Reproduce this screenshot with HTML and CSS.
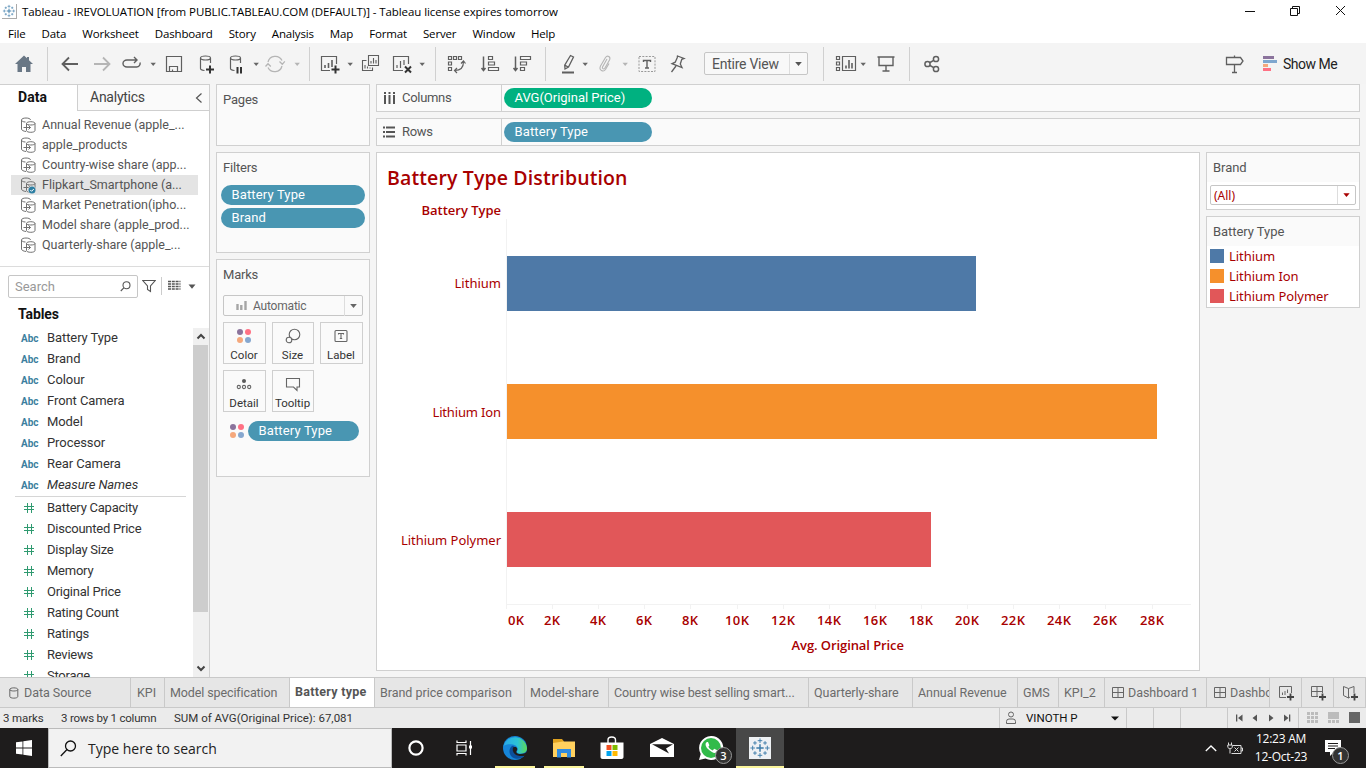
FILE: index.html
```html
<!DOCTYPE html>
<html lang="en">
<head>
<meta charset="utf-8">
<title>Tableau - IREVOLUATION</title>
<link rel="stylesheet" href="styles.css">
</head>
<body>
<svg class="defs" width="0" height="0">
  <symbol id="caret" viewBox="0 0 8 22"><path d="M1.500 9.700h5.400L4.200 13z" fill="currentColor"/></symbol>
  <symbol id="caretbig" viewBox="0 0 18 20"><path d="M5.500 8h7L9 12.200z" fill="currentColor"/></symbol>
  <symbol id="ds" viewBox="0 0 16 18"><g fill="none" stroke="#707070"><path d="M6 15.500C3.500 15.200 1.500 14.300 1.500 13V4c0-1.300 2-2 4.500-2s4.500.7 4.500 2M1.500 4c0 1 1.500 2 4 2"/><path d="M6.500 7.500v7c0 2.400 8.500 2.400 8.500 0v-7c0-2.400-8.500-2.400-8.500 0c0 2 8.500 2 8.500 0M3.500 11.500h7M8.500 9.500l2 2-2 2"/></g></symbol>
  <symbol id="dots" viewBox="0 0 16 16"><circle cx="4" cy="4" r="3" fill="#8b739c"/><circle cx="12" cy="4" r="3" fill="#ff7184"/><circle cx="4" cy="12" r="3" fill="#f5a87c"/><circle cx="12" cy="12" r="3" fill="#86a7cf"/></symbol>
  <symbol id="logo" viewBox="0 0 24 24"><g stroke="#3b7ba8" fill="none"><path d="M12 8v8M8 12h8" stroke-width="1.600"/><path d="M12 1.500v5M9.500 4h5M12 17.500v5M9.500 20h5M1.500 12h5M4 9.500v5M17.500 12h5M20 9.500v5M6.500 4.500v4M4.500 6.500h4M17.500 4.500v4M15.500 6.500h4M6.500 15.500v4M4.500 17.500h4M17.500 15.500v4M15.500 17.500h4" stroke-width="1"/></g></symbol>
  <symbol id="grid4" viewBox="0 0 12 12"><path d="M.5.5h11v10H.5zM.5 5.500h11M6 .5v10" fill="none" stroke="#666"/></symbol>
</svg>

<header class="titlebar">
  <svg class="app" width="15" height="15"><use href="#logo"/></svg>
  <span class="title">Tableau - IREVOLUATION [from PUBLIC.TABLEAU.COM (DEFAULT)] - Tableau license expires tomorrow</span>
  <svg class="winctl" width="120" height="24" fill="none" stroke="#111"><path d="M6 12.500h10M51.500 9.500h7v7h-7zM53.500 9.500v-2h7v7h-2M97 7l9 9M106 7l-9 9"/></svg>
</header>
<nav class="menu">
  <span>File</span><span>Data</span><span>Worksheet</span><span>Dashboard</span><span>Story</span><span>Analysis</span><span>Map</span><span>Format</span><span>Server</span><span>Window</span><span>Help</span>
</nav>

<div class="toolbar">
  <svg class="ic" viewBox="0 0 22 22"><path d="M11 2.500l3 2.800V4h2v3.200L20 11h-2.500v8h-4.500v-5h-4v5H4.500v-8H2z" fill="#697785"/></svg>
  <i class="sep"></i>
  <svg class="ic" viewBox="0 0 22 22"><path d="M10 4.500L3.500 11l6.500 6.500M3.500 11H19" stroke-width="1.800"/></svg>
  <svg class="ic off" viewBox="0 0 22 22"><path d="M12 4.500l6.500 6.500-6.500 6.500M18.500 11H3" stroke-width="1.800"/></svg>
  <svg class="ic" viewBox="0 0 22 22"><path d="M16 7H6a4 3.500 0 0 0 0 7h9.500a3.500 3.500 0 0 0 3.500-4.500M13 4l3 3-3 3" stroke-width="1.400"/></svg>
  <svg class="cr"><use href="#caret"/></svg>
  <svg class="ic" viewBox="0 0 22 22"><path d="M3.500 3.500h15v15h-15zM6.500 18.500v-5h8v5M9.500 18.500v-2" stroke-width="1.200"/></svg>
  <svg class="ic" viewBox="0 0 22 22"><path d="M15.500 10V5c0-1.400-2.200-2-5-2s-5 .6-5 2v10.500c0 1 1.500 1.700 4 2M5.500 5c0 1.400 2.200 2 5 2s5-.6 5-2" stroke-width="1.200"/><path d="M15 12.500v8M11 16.500h8" stroke="#333" stroke-width="2"/></svg>
  <svg class="ic" viewBox="0 0 22 22"><path d="M15.500 10V5c0-1.400-2.200-2-5-2s-5 .6-5 2v10.500c0 1 1.500 1.700 4 2M5.500 5c0 1.400 2.200 2 5 2s5-.6 5-2" stroke-width="1.200"/><path d="M12.500 14v6.500M16 14v6.500" stroke="#333" stroke-width="2"/></svg>
  <svg class="cr"><use href="#caret"/></svg>
  <svg class="ic off" viewBox="0 0 22 22"><path d="M4 9a7.500 7.500 0 0 1 14-1.500M18 13a7.500 7.500 0 0 1-14 1.500M15.500 8.500l2.800 2.800 2.500-3M1.500 13.500L4 10.700l2.800 2.800" stroke-width="1.300"/></svg>
  <svg class="cr off"><use href="#caret"/></svg>
  <i class="sep"></i>
  <svg class="ic" viewBox="0 0 22 22"><path d="M11 17.500H2.500v-14h15V11" stroke-width="1.200"/><path d="M6 15v-3M9.500 15v-5M13 14V7" stroke-width="1.600"/><path d="M16.500 12.500v8M12.500 16.500h8" stroke="#333" stroke-width="2"/></svg>
  <svg class="cr"><use href="#caret"/></svg>
  <svg class="ic" viewBox="0 0 22 22"><path d="M8.500 2.500h10v10h-10zM6.500 7.500h-4v10h10v-3M11 10.500V8M13.500 10.500V5M16 10.500V7M5 15.500V12M7.500 15.500v-2M10 15.500v-1" stroke-width="1.100"/></svg>
  <svg class="ic" viewBox="0 0 22 22"><path d="M12 17.500H2.500v-14h15V11M6 15v-3M9.500 15V8M13 12V7" stroke-width="1.200"/><path d="M14 13.500l6 6M20 13.500l-6 6" stroke="#333" stroke-width="2"/></svg>
  <svg class="cr"><use href="#caret"/></svg>
  <i class="sep"></i>
  <svg class="ic" viewBox="0 0 22 22"><path d="M2.500 3.500h3v3h-3zM7.500 3.500h3v3h-3zM12.500 3.500h3v3h-3zM2.500 9h3v3h-3zM2.500 14.500h3v3h-3zM17.500 8.500c0 6-3 9-8.500 9M15 10.500l2.500-2.500 2 2.500M11 15l-2.500 2.500L11 20" stroke-width="1.200"/></svg>
  <svg class="ic" viewBox="0 0 22 22"><path d="M4.500 3.500v14M2.500 15l2 2.500 2-2.500" stroke-width="1.500"/><path d="M9.500 3.500h4v3h-4zM9.500 9h6v3h-6zM9.500 14.500h10v3h-10z" stroke-width="1.200"/></svg>
  <svg class="ic" viewBox="0 0 22 22"><path d="M4.500 3.500v14M2.500 15l2 2.500 2-2.500" stroke-width="1.500"/><path d="M9.500 3.500h10v3h-10zM9.500 9h6v3h-6zM9.500 14.500h4v3h-4z" stroke-width="1.200"/></svg>
  <i class="sep"></i>
  <svg class="ic" viewBox="0 0 22 22"><path d="M13.500 2.500l3 1.500-5 10-3.500 2-.3-3.800zM7.700 12.200l3.500 1.800" stroke-width="1.300"/><path d="M5 19.500h12" stroke-width="2"/></svg>
  <svg class="cr"><use href="#caret"/></svg>
  <svg class="ic off" viewBox="0 0 22 22"><path d="M13 6l-4.500 8c-.7 2 1.500 2.500 2.300 1.200L15.500 7c1.500-3-2-5.500-4-2.500L6.500 13c-2 4.500 3 6.500 5 3.500l3.500-6" stroke-width="1.100"/></svg>
  <svg class="cr off"><use href="#caret"/></svg>
  <svg class="ic" viewBox="0 0 22 22"><path d="M3 3.500h16v15H3z" stroke-dasharray="2 1.300" stroke="#999"/><path d="M7.500 9V7.500h7V9M11 7.500V15M9 15h4" stroke-width="1.400"/></svg>
  <svg class="ic" viewBox="0 0 22 22"><path d="M11.500 3l6.500 2.500-2.200.8-1.500 4.700 1.700 3.500-10-3.800 3.200-1.500 2-4.500zM10 13l-4.500 6" stroke-width="1.300"/></svg>
  <div class="select view"><span>Entire View</span><svg class="big"><use href="#caretbig"/></svg></div>
  <i class="sep"></i>
  <svg class="ic" viewBox="0 0 22 22"><path d="M1.500 3.500h3v3h-3zM1.500 9h3v3h-3zM1.500 14.500h3v3h-3zM7.500 3.500h13v14h-13z" stroke-width="1.200"/><path d="M11 15.500v-3M14 15.500V7M17 15.500V10" stroke-width="1.600"/></svg>
  <svg class="cr"><use href="#caret"/></svg>
  <svg class="ic" viewBox="0 0 22 22"><path d="M2.500 4h17M4 4v8.500h14V4M11 12.500V18M7.500 18h7" stroke-width="1.400"/></svg>
  <i class="sep"></i>
  <svg class="ic" viewBox="0 0 22 22"><g stroke-width="1.500"><circle cx="6.500" cy="11" r="2.600"/><circle cx="15" cy="6" r="2.600"/><circle cx="15" cy="16" r="2.600"/><path d="M9 9.500L12.700 7.400M9 12.500l3.700 2.100"/></g></svg>
  <svg class="ic" viewBox="0 0 22 22"><path d="M3.500 4.500h14l2.500 3.500-2.500 3.500h-14zM11.500 2.500v2M11.500 11.500V19M9 19.500h5" stroke-width="1.300"/></svg>
  <svg class="ic nostroke" viewBox="0 0 22 22"><path d="M0 3h11v3H0z" fill="#8b739c"/><path d="M0 7h14v3H0z" fill="#7fa7cf"/><path d="M0 11h5v3H0z" fill="#f5a87c"/><path d="M0 15h8v3H0z" fill="#ff7184"/></svg>
  <span class="showme">Show Me</span>
</div>

<main>
  <aside class="datapane">
    <div class="ptabs"><b>Data</b><div class="an"><span>Analytics</span><svg width="8" height="12"><path d="M6.500 1.500L1.500 6l5 4.500" fill="none" stroke="#555" stroke-width="1.200"/></svg></div></div>
    <ul class="sources">
      <li><svg><use href="#ds"/></svg><span>Annual Revenue (apple_...</span></li>
      <li><svg><use href="#ds"/></svg><span>apple_products</span></li>
      <li><svg><use href="#ds"/></svg><span>Country-wise share (app...</span></li>
      <li class="on"><svg><use href="#ds"/><circle cx="12" cy="14" r="4" fill="#e4e4e4"/><circle cx="12" cy="14" r="3.500" fill="#2e7fa3"/><path d="M10.300 14l1.300 1.300 2.200-2.300" stroke="#fff" fill="none"/></svg><span>Flipkart_Smartphone (a...</span></li>
      <li><svg><use href="#ds"/></svg><span>Market Penetration(ipho...</span></li>
      <li><svg><use href="#ds"/></svg><span>Model share (apple_prod...</span></li>
      <li><svg><use href="#ds"/></svg><span>Quarterly-share (apple_...</span></li>
    </ul>
    <div class="find">
      <div class="box"><span>Search</span><svg width="11" height="11" fill="none" stroke="#555" stroke-width="1.100"><circle cx="6.500" cy="4.200" r="3.500"/><path d="M4 6.700L.8 10"/></svg></div>
      <svg width="14" height="14" fill="none" stroke="#555" stroke-width="1.100"><path d="M.8 1.500h12.400L8.500 7v5.500l-3-2V7z"/></svg>
      <i></i>
      <svg width="13" height="12" fill="none" stroke="#555"><path d="M0 1.500h12.500M0 4h12.500M0 6.500h12.500M0 9h12.500" stroke-width="1.300" stroke-dasharray="3 .8"/></svg>
      <svg class="dn" width="8" height="5"><path d="M.5.5h7L4 4.700z" fill="#555"/></svg>
    </div>
    <h2>Tables</h2>
    <div class="fields">
      <div class="flist">
        <p><b>Abc</b>Battery Type</p><p><b>Abc</b>Brand</p><p><b>Abc</b>Colour</p><p><b>Abc</b>Front Camera</p><p><b>Abc</b>Model</p><p><b>Abc</b>Processor</p><p><b>Abc</b>Rear Camera</p><p><b>Abc</b><em>Measure Names</em></p>
        <hr>
        <p class="m">Battery Capacity</p><p class="m">Discounted Price</p><p class="m">Display Size</p><p class="m">Memory</p><p class="m">Original Price</p><p class="m">Rating Count</p><p class="m">Ratings</p><p class="m">Reviews</p><p class="m">Storage</p>
      </div>
      <div class="scroll"><svg width="16" height="17"><path d="M4.500 10.500L8 7l3.500 3.500" fill="none" stroke="#444" stroke-width="2"/></svg><i></i><svg width="16" height="17"><path d="M4.500 6.500L8 10l3.500-3.500" fill="none" stroke="#444" stroke-width="2"/></svg></div>
    </div>
  </aside>

  <section class="cards">
    <div class="card pages"><h3>Pages</h3></div>
    <div class="card filters"><h3>Filters</h3><div class="pill">Battery Type</div><div class="pill">Brand</div></div>
    <div class="card marks"><h3>Marks</h3>
      <div class="select auto"><svg width="11" height="12" fill="none" stroke="#a5a5a5" stroke-width="2.400"><path d="M1.500 10V4M5.300 10V5M9.500 10V1"/></svg><span>Automatic</span><svg class="big"><use href="#caretbig"/></svg></div>
      <div class="btns">
        <div><svg><use href="#dots"/></svg>Color</div>
        <div><svg viewBox="0 0 16 16"><circle cx="9.500" cy="6.500" r="5.300"/><circle cx="4" cy="12" r="2.800" fill="#fafafa"/></svg>Size</div>
        <div><svg viewBox="0 0 16 16"><rect x="2" y="2.500" width="12" height="11" rx="1"/><path d="M5.500 6.500v-1h5v1M8 5.500v5M6.800 10.500h2.400"/></svg>Label</div>
        <div><svg viewBox="0 0 16 16"><circle cx="8" cy="5" r="1.500" fill="#555"/><circle cx="2.800" cy="11" r="1.600"/><circle cx="8" cy="11" r="1.600"/><circle cx="13.200" cy="11" r="1.600"/></svg>Detail</div>
        <div><svg viewBox="0 0 16 16"><path d="M1.500 2.500h13v8.500h-2.500v3.500l-3.500-3.500h-7z"/></svg>Tooltip</div>
      </div>
      <div class="enc"><svg width="16" height="16"><use href="#dots"/></svg><div class="pill">Battery Type</div></div>
    </div>
  </section>

  <section class="work">
    <div class="shelf"><div class="lbl"><svg width="12" height="12" stroke="#555" stroke-width="2"><path d="M2 0v12M6.500 0v12M11 0v12"/><path d="M0 2.500h12" stroke="#fafafa" stroke-width="1"/></svg><span>Columns</span></div><div class="pill green">AVG(Original Price)</div></div>
    <div class="shelf"><div class="lbl"><svg width="12" height="12" stroke="#555" stroke-width="2"><path d="M0 1.500h12M0 6h12M0 10.500h12"/><path d="M2.500 0v12" stroke="#fafafa" stroke-width="1"/></svg><span>Rows</span></div><div class="pill">Battery Type</div></div>
    <div class="vizrow">
      <svg class="viz" viewBox="377 153 822 517" width="822" height="517">
        <g fill="#a80000" font-weight="600">
          <text x="387" y="185" font-size="19.500" textLength="240.500">Battery Type Distribution</text>
          <text x="421.500" y="215" textLength="79.500">Battery Type</text>
          <text x="791.500" y="650" textLength="112.500">Avg. Original Price</text>
        </g>
        <g fill="#a80000" class="r">
          <text x="454.500" y="288" textLength="46.500">Lithium</text>
          <text x="432.500" y="417" textLength="68.500">Lithium Ion</text>
          <text x="401" y="545" textLength="100">Lithium Polymer</text>
        </g>
        <path d="M506.500 219v390M506 604.500h685M552.500 605v4M598.500 605v4M644.500 605v4M690.500 605v4M737.500 605v4M783.500 605v4M829.500 605v4M875.500 605v4M921.500 605v4M967.500 605v4M1013.500 605v4M1059.500 605v4M1105.500 605v4M1152.500 605v4" stroke="#f2f2f2" fill="none"/>
        <rect x="507" y="256" width="469" height="55" fill="#4e79a7"/>
        <rect x="507" y="384" width="650" height="55" fill="#f5902c"/>
        <rect x="507" y="512" width="424" height="55" fill="#e15759"/>
        <g fill="#a80000" font-weight="600" text-anchor="middle">
          <text x="516" y="625" textLength="16">0K</text><text x="552" y="625" textLength="16">2K</text><text x="598" y="625" textLength="16">4K</text><text x="644" y="625" textLength="16">6K</text><text x="690" y="625" textLength="16">8K</text><text x="737" y="625" textLength="24">10K</text><text x="783" y="625" textLength="24">12K</text><text x="829" y="625" textLength="24">14K</text><text x="875" y="625" textLength="24">16K</text><text x="921" y="625" textLength="24">18K</text><text x="967" y="625" textLength="24">20K</text><text x="1013" y="625" textLength="24">22K</text><text x="1059" y="625" textLength="24">24K</text><text x="1105" y="625" textLength="24">26K</text><text x="1152" y="625" textLength="24">28K</text>
        </g>
      </svg>
      <div class="side">
        <div class="leg brand"><h4>Brand</h4><div class="select all"><span>(All)</span><svg class="big"><use href="#caretbig"/></svg></div></div>
        <div class="leg"><h4>Battery Type</h4><ul><li class="b">Lithium</li><li class="o">Lithium Ion</li><li class="p">Lithium Polymer</li></ul></div>
      </div>
    </div>
  </section>
</main>

<nav class="tabs">
  <span class="src"><svg width="10" height="12" fill="none" stroke="#666"><path d="M.8 2.500v7c0 2.200 8 2.200 8 0v-7c0-2.200-8-2.200-8 0c0 2 8 2 8 0"/></svg>Data Source</span>
  <span class="kpi">KPI</span><span class="tight">Model specification</span><span class="cur">Battery type</span><span>Brand price comparison</span><span>Model-share</span><span class="tight">Country wise best selling smart...</span><span>Quarterly-share</span><span>Annual Revenue</span><span>GMS</span><span>KPI_2</span>
  <span class="dash"><svg width="12" height="12"><use href="#grid4"/></svg>Dashboard 1</span><span class="dash"><svg width="12" height="12"><use href="#grid4"/></svg>Dashbo</span>
  <span class="new"><svg viewBox="0 0 16 16"><path d="M8 12.500H1.500v-11h12V8M4.500 10V7.500M7 10V6M9.500 8V4.500"/><path d="M12.500 8.500v7M9 12h7" stroke="#444" stroke-width="1.800"/></svg></span>
  <span class="new"><svg viewBox="0 0 16 16"><path d="M8 11.500H1.500v-10h11V8M1.500 6.500h11M7 1.500v10"/><path d="M12.500 8.500v7M9 12h7" stroke="#444" stroke-width="1.800"/></svg></span>
  <span class="new"><svg viewBox="0 0 16 16"><path d="M8 12L6.500 13l-5-2.500v-9l5 2 5.500-2V8M6.500 3.500V13"/><path d="M12.500 8.500v7M9 12h7" stroke="#444" stroke-width="1.800"/></svg></span>
</nav>

<div class="status">
  <span class="s1">3 marks</span><span class="s2">3 rows by 1 column</span><span class="s3">SUM of AVG(Original Price): 67,081</span>
  <div class="user"><svg width="12" height="14" fill="none" stroke="#666"><circle cx="6" cy="3.500" r="2.500"/><path d="M1.500 12.500v-2a2.500 2.500 0 0 1 2.500-2.500h4a2.500 2.500 0 0 1 2.500 2.500v2z"/></svg><span>VINOTH P</span><svg width="8" height="5"><path d="M0 .5h8L4 4.500z" fill="#111"/></svg></div>
  <i></i><i></i><i class="w"></i>
  <div class="navb"><svg width="60" height="10" fill="#555"><path d="M3 1.500h1.300v7H3zM9.500 1.500v7L5 5zM24 1.500v7L19.500 5zM36 1.500v7L40.500 5zM51 1.500v7L55.500 5zM56 1.500h1.300v7H56z"/></svg></div>
  <div class="views"><svg width="54" height="12" fill="#bcbcbc"><path d="M0 0h3v3H0zM4 0h3v3H4zM8 0h3v3H8zM0 4h3v3H0zM4 4h3v3H4zM8 4h3v3H8zM0 8h3v3H0zM4 8h3v3H4zM8 8h3v3H8zM21 0h11v7H21zM21 8h3v3h-3zM25 8h3v3h-3zM29 8h3v3h-3z"/><path d="M42 0h11v11H42z" fill="#666"/></svg></div>
</div>

<footer class="taskbar">
  <div><svg width="16" height="16" fill="#fff"><path d="M0 2.300l6.500-.9v6.200H0zM7.300 1.300L16 0v7.600H7.300zM0 8.400h6.500v6.200L0 13.700zM7.300 8.400H16V16l-8.700-1.200z"/></svg></div>
  <div class="search"><svg width="17" height="17" fill="none" stroke="#111" stroke-width="1.300"><circle cx="10.500" cy="6" r="5"/><path d="M7 9.500L.8 16"/></svg><span>Type here to search</span></div>
  <div><svg width="18" height="18"><circle cx="9" cy="9" r="6.600" fill="none" stroke="#fff" stroke-width="2.200"/></svg></div>
  <div class="tv"><svg width="17" height="16" fill="none" stroke="#fff" stroke-width="1.200"><path d="M1 .5v2h9v-2M1 15.500v-2h9v2M1 5h9v6H1zM14.500 1v14"/><path d="M13 5.500h3v3h-3z" fill="#fff" stroke="none"/></svg></div>
  <div class="run"><svg width="24" height="24" viewBox="0 0 24 24"><defs><linearGradient id="eg"><stop offset="0" stop-color="#29a9e8"/><stop offset=".6" stop-color="#2cc3d5"/><stop offset="1" stop-color="#5ed953"/></linearGradient></defs><circle cx="12" cy="12" r="12" fill="#1685d8"/><path d="M.5 10A12 12 0 0 1 24 12c0 4-3 5.500-6.500 5.500-2.500 0-4-1-3.500-2 1.500-2 1-6-4-7C6 8 2.500 8.500.5 10z" fill="url(#eg)"/><path d="M10 9.500c-5 2-5 11 2 13 4 1 8-.5 10.500-4-2 1.200-6 1.700-9 0-3-1.500-4.500-5-2-7.500z" fill="#0b4f9c"/><path d="M10.300 11.300c1.500-1.400 4-.5 4 1.700 0 1.700-1.500 2.200-.8 3.500 1 1.700 4.500 2 8 .7l2-1.200v3.200c-4 1.600-9.300 1-11.700-1.200-2-1.800-2.700-4.800-1.500-6.700z" fill="#1e1c1c"/></svg></div>
  <div class="run"><svg width="22" height="19"><path d="M0 0h9l2 2.500V6H0z" fill="#e0a220"/><path d="M0 4l10-1.500h12V18H0z" fill="#ffd05e"/><path d="M4 10h14v8.500h-4V14H8v4.500H4z" fill="#2f8be0"/></svg></div>
  <div><svg width="24" height="24"><path d="M8 7V4c0-4 7.500-4 7.500 0v3" fill="none" stroke="#fff" stroke-width="1.400"/><path d="M.5 6.500h23V21c0 1.300-.8 2-2 2h-19c-1.200 0-2-.7-2-2z" fill="#fff"/><path d="M6.500 9h5v5h-5z" fill="#f25022"/><path d="M12.500 9h5v5h-5z" fill="#7fba00"/><path d="M6.500 15h5v5h-5z" fill="#00a4ef"/><path d="M12.500 15h5v5h-5z" fill="#ffb900"/></svg></div>
  <div class="mail"><svg width="24" height="20"><path d="M0 6l12-6 12 6v13H0z" fill="#fff"/><path d="M2 6.200h21l-7 4.200 3 5L2 6.200z" fill="#1e1c1c"/></svg></div>
  <div class="badge"><svg width="25" height="25"><path d="M12 0a12 12 0 1 1-5.500 22.500L0 24l1.700-6A12 12 0 0 1 12 0z" fill="#fff"/><circle cx="12" cy="12" r="10" fill="#32bb4a"/><path d="M8 6c-2 1-2 4 1 7s6.500 4.800 8.500 3.500c1-.6 1-2 .7-2.300l-3-1.400-1.500 1.600c-2-.6-3.500-2-4.300-3.700l1-1.500L9 6z" fill="#fff"/></svg><em>3</em></div>
  <div class="act"><svg class="tile" width="22" height="22"><use href="#logo"/></svg></div>
  <div class="tray">
    <svg width="12" height="7" fill="none" stroke="#fff" stroke-width="1.300"><path d="M.8 6L6 1l5.200 5"/></svg>
    <svg class="bat" width="17" height="12" fill="none" stroke="#ddd"><path d="M4.500 11.500h9.500v-8H6M14 6h1.500v3H14M7.500 5.500l4 4M11.500 5.500l-4 4M1.500.5V3M4.500.5V3M.8 3h4.500v2c0 1-1 1.500-2.200 1.500S.8 6 .8 5zM3 6.500v5"/></svg>
    <div class="clock"><span>12:23 AM</span><span>12-Oct-23</span></div>
    <div class="badge note"><svg width="16" height="16"><path d="M0 0h16v12H9l-4 4v-4H0z" fill="#fff"/><path d="M3 3.500h10M3 6h10M3 8.500h7" stroke="#1e1c1c"/></svg><em>1</em></div>
  </div>
</footer>
</body>
</html>
```
FILE: styles.css
```css
* { box-sizing: border-box; }
body { margin: 0; width: 1366px; height: 768px; overflow: hidden; display: flex; flex-direction: column; background: #f5f5f5; font: 13px Roboto, "Liberation Sans", sans-serif; color: #333; white-space: nowrap; }
svg { display: block; flex: none; }
.defs { position: absolute; }
h2, h3, h4, p, ul { margin: 0; padding: 0; list-style: none; font-weight: 400; }

.titlebar { height: 24px; flex: none; background: #fff; display: flex; align-items: center; padding-bottom: 2px; font: 11.5px "Open Sans", sans-serif; color: #000; }
.titlebar .app { margin: 0 5px 0 2px; border-right: 1px solid #aaa; border-bottom: 1px solid #aaa; }
.titlebar .title { letter-spacing: -.08px; }
.winctl { margin-left: auto; margin-right: 7px; }
.menu { height: 19px; flex: none; background: #fff; display: flex; gap: 16px; padding-left: 8px; line-height: 19px; font-family: "Open Sans", sans-serif; font-size: 11.5px; letter-spacing: -.15px; color: #000; }

.toolbar { height: 41px; flex: none; padding-left: 13px; display: grid; align-items: center; justify-items: start; background: #f4f4f4;
  grid-template-columns: 34px 12px 32px 30px 28px 14px 32px 30px 27px 12px 29px 16px 10px 27px 14px 31px 27px 17px 11px 33px 32px 34px 12px 24px 13px 27px 15px 30px 38px 119px 12px 24px 16px 34px 12px 302px 40px 20px 1fr; }
.ic { width: 22px; height: 22px; fill: none; stroke: #5f5f5f; }
.ic.off { stroke: #b5b5b5; }
.ic:first-child, .nostroke { stroke: none; }
.cr { width: 8px; height: 22px; color: #666; }
.cr.off { color: #b5b5b5; }
.sep { width: 1px; height: 34px; background: #d0d0d0; }
.showme { font-size: 14px; color: #222; letter-spacing: -.5px; }
.select { display: flex; align-items: center; border: 1px solid #c6c6c6; border-radius: 2px; background: #fff; color: #555; }
.big { margin-left: auto; width: 18px; height: 20px; border-left: 1px solid #ddd; }
.view { width: 104px; height: 23px; background: #f8f8f8; padding-left: 7px; font-size: 14px; letter-spacing: -.25px; }

main { height: 593px; flex: none; display: flex; align-items: flex-start; }
.datapane { width: 210px; height: 593px; background: #fff; border-right: 1px solid #cfcfcf; border-top: 1px solid #cfcfcf; display: flex; flex-direction: column; margin-right: 6px; }
.ptabs { display: flex; height: 26px; flex: none; line-height: 25px; font-size: 14px; }
.ptabs b { width: 77px; padding-left: 18px; color: #111; letter-spacing: .05px; }
.an { flex: 1; border-left: 1px solid #cfcfcf; border-bottom: 1px solid #cfcfcf; background: #fafafa; padding: 0 6px 0 12px; display: flex; justify-content: space-between; align-items: center; color: #444; letter-spacing: -.25px; }
.sources { height: 156px; flex: none; padding-top: 4px; border-bottom: 1px solid #dcdcdc; }
.sources li { height: 20px; margin: 0 11px; padding-left: 9px; display: flex; align-items: center; gap: 6px; color: #555; font-size: 12.5px; letter-spacing: 0; line-height: 18px; }
.sources svg { width: 16px; height: 18px; overflow: visible; }
.sources .on { background: #e4e4e4; }
.find { height: 38px; flex: none; display: flex; align-items: center; padding-left: 8px; }
.box { width: 130px; height: 23px; border: 1px solid #c6c6c6; border-radius: 2px; display: flex; justify-content: space-between; align-items: center; padding: 0 6px; color: #999; margin-right: 4px; }
.find i { width: 1px; height: 18px; background: #ccc; margin: 0 6px 0 5px; }
.find .dn { margin-left: 7px; }
h2 { font-size: 14px; font-weight: 700; color: #111; line-height: 19px; height: 23px; flex: none; padding-left: 18px; letter-spacing: -.1px; }
.fields { flex: 1; min-height: 0; display: flex; justify-content: space-between; overflow: hidden; }
.flist b { width: 26px; color: #3c7f9e; font-size: 10px; letter-spacing: 0; line-height: 22px; }
.flist { padding-left: 15px; }
.flist p { height: 21px; line-height: 20px; display: flex; color: #333; padding-left: 6px; letter-spacing: -.08px; }
.flist .m { letter-spacing: -.24px; }
.flist hr { width: 171px; border: 0; border-top: 1px solid #d6d6d6; margin: 0 0 1px; }
.flist .m::before { content: ""; width: 10px; height: 10px; margin: 5px 13px 0 3px; background:
  linear-gradient(#2f9a70, #2f9a70) 3px 0 / 1px 10px no-repeat, linear-gradient(#2f9a70, #2f9a70) 7px 0 / 1px 10px no-repeat,
  linear-gradient(#2f9a70, #2f9a70) 0 3px / 10px 1px no-repeat, linear-gradient(#2f9a70, #2f9a70) 0 6px / 10px 1px no-repeat; }
.scroll { width: 16px; background: #f0f0f0; display: flex; flex-direction: column; }
.scroll i { height: 267px; background: #cdcdcd; margin: 0 1px 0 0; }
.scroll svg:last-child { margin-top: auto; }

.cards { width: 154px; margin-right: 6px; display: flex; flex-direction: column; gap: 6px; }
.card { border: 1px solid #d0d0d0; background: #fafafa; }
.card h3 { font-size: 13px; line-height: 30px; height: 32px; padding-left: 6px; color: #555; letter-spacing: -.2px; }
.pages { height: 62px; }
.filters { height: 101px; }
.marks { height: 218px; }
.pill { height: 20px; line-height: 19px; border-radius: 10px; background: #4996b2; color: #fff; padding-left: 10.5px; letter-spacing: .15px; }
.pill.green { background: #00b180; letter-spacing: -.02px; }
.filters .pill { margin: 0 4px 3px; }
.auto { margin: 3px 6px 6px; height: 21px; background: #fafafa; padding-left: 12px; gap: 6px; color: #666; font-size: 12px; letter-spacing: -.2px; }
.btns { display: grid; grid-template-columns: 43px 42px 43px; gap: 6px; padding-left: 6px; row-gap: 6px; }
.btns div { height: 42px; border: 1px solid #cfcfcf; display: flex; flex-direction: column; align-items: center; justify-content: space-between; padding: 5px 1px 1px 0; font-size: 11.5px; color: #333; }
.btns svg { width: 16px; height: 16px; fill: none; stroke: #666; stroke-width: 1.1; }
.btns div:first-child svg { stroke: none; }
.enc { display: flex; align-items: center; padding: 9px 10px 0 12px; gap: 3px; }
.enc .pill { flex: 1; }

.work { width: 984px; display: flex; flex-direction: column; }
.shelf { height: 28px; border: 1px solid #d0d0d0; background: #fafafa; display: flex; align-items: center; margin-bottom: 6px; }
.shelf .lbl { width: 125px; height: 26px; border-right: 1px solid #d0d0d0; display: flex; align-items: center; gap: 7px; padding-left: 6px; color: #555; letter-spacing: -.3px; }
.lbl span { padding-bottom: 1px; }
.shelf .pill { width: 148px; margin-left: 2px; }
.vizrow { display: flex; gap: 6px; align-items: flex-start; }
.viz { width: 824px; height: 519px; border: 1px solid #d0d0d0; background: #fff; font-family: "Open Sans", sans-serif; font-size: 13px; }
.viz .r { font-family: "Noto Sans", sans-serif; font-weight: 400; }
.side { flex: 1; display: flex; flex-direction: column; gap: 6px; }
.leg { border: 1px solid #d0d0d0; background: #fff; color: #a80000; font-family: "Noto Sans", sans-serif; }
.brand { height: 58px; }
.leg h4 { background: #fafafa; height: 29px; padding-left: 6px; font: 13px/30px Roboto, sans-serif; color: #555; letter-spacing: -.05px; }
.all { margin: 3px; height: 20px; padding-left: 3px; font-size: 12px; color: #a80000; }
.all .big { height: 18px; }
.leg li { line-height: 20px; height: 20px; display: flex; align-items: center; gap: 5px; padding-left: 3px; letter-spacing: -.05px; }
.leg li::before { content: ""; width: 14px; height: 14px; background: #4e79a7; }
.leg .o::before { background: #f5902c; }
.leg .p::before { background: #e15759; }
.leg ul { height: 61px; }

.tabs { height: 31px; flex: none; border-top: 1px solid #c9c9c9; border-bottom: 1px solid #c9c9c9; background: #e6e6e6; color: #6b6b6b; display: grid;
  grid-template-columns: 131px 34px 125px 85px 150px 84px 200px 104px 105px 41px 46px 102px 63px 32px 32px 32px; }
.tabs span { border-right: 1px solid #c9c9c9; padding-left: 5px; display: flex; align-items: center; overflow: hidden; font-size: 12.5px; letter-spacing: -.03px; }
.tabs .tight { letter-spacing: -.11px; }
.tabs .src { padding-left: 9px; gap: 5px; }
.tabs .kpi { padding-left: 6px; }
.tabs .cur { background: #fff; font-weight: 700; color: #555; letter-spacing: .28px; padding-bottom: 2px; }
.tabs .dash { gap: 4px; padding-left: 7px; }
.tabs .new { padding: 0; justify-content: center; }
.new svg { width: 16px; height: 16px; fill: none; stroke: #666; }

.status { height: 20px; flex: none; background: #ebebeb; display: flex; align-items: center; font-size: 11.5px; color: #333; padding-left: 3px; }
.s1 { width: 58px; letter-spacing: -.1px; }
.s2 { width: 113px; letter-spacing: -.22px; }
.s3 { flex: 1; }
.status > div, .status i { height: 20px; border-left: 1px solid #c9c9c9; display: flex; align-items: center; }
.user { width: 127px; padding: 0 7px 0 5px; }
.user span { flex: 1; padding-left: 9px; color: #111; }
.status i { width: 27px; }
.status i.w { width: 47px; }
.navb { width: 71px; padding-left: 5px; }
.views { width: 68px; padding-left: 8px; }

.taskbar { height: 40px; flex: none; background: #1e1c1c; display: grid; grid-template-columns: 48px 344px 48px 48px 54px 44px 52px 48px 50px 48px 1fr; font-family: "Open Sans", sans-serif; color: #fff; }
.taskbar > div { display: flex; align-items: center; justify-content: center; }
.taskbar .search { background: #f2f2f2; border: 1px solid #bbb; justify-content: flex-start; padding-left: 11px; gap: 11px; color: #222; font-size: 14px; }
.run { background: linear-gradient(#fbf59b, #fbf59b) center bottom / 40px 2px no-repeat; }
.act { background: linear-gradient(#fbf59b, #fbf59b) center bottom / 48px 2px no-repeat #484848; }
.tile { background: #eef1f4; }
.badge { position: relative; }
.badge em { position: absolute; right: 4px; bottom: 4px; width: 17px; height: 17px; border: 1px solid #999; border-radius: 50%; background: #333; text-align: center; font: 600 11px/15px "Open Sans", sans-serif; }
.taskbar .tray { justify-content: flex-end; padding-right: 25px; font-size: 12px; }
.bat { margin: 0 10px; }
.clock { width: 54px; display: flex; flex-direction: column; align-items: center; line-height: 18px; letter-spacing: -.25px; }
.note { margin-left: 17px; }
.note em { right: -8px; bottom: -8px; }
```
